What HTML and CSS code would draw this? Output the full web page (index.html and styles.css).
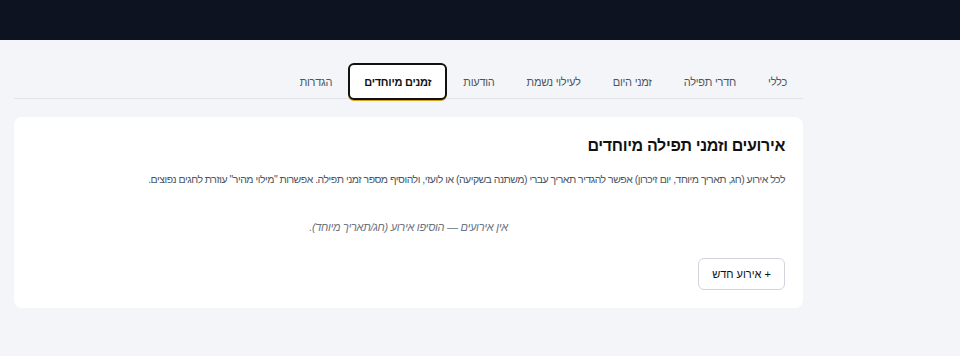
FILE: index.html
```html
<!DOCTYPE html>
<html lang="he" dir="rtl">
<head>
  <meta charset="UTF-8" />
  <meta name="viewport" content="width=device-width, initial-scale=1" />
  <title>זמנים מיוחדים</title>
  <link rel="stylesheet" href="styles.css">
</head>
<body>
  <header class="topbar"></header>

  <main class="page">
    <nav class="tabs">
      <button class="tab">כללי</button>
      <button class="tab">חדרי תפילה</button>
      <button class="tab">זמני היום</button>
      <button class="tab">לעילוי נשמת</button>
      <button class="tab">הודעות</button>
      <button class="tab active">זמנים מיוחדים</button>
      <button class="tab">הגדרות</button>
    </nav>

    <section class="card">
      <h2>אירועים וזמני תפילה מיוחדים</h2>
      <p class="desc">לכל אירוע (חג, תאריך מיוחד, יום זיכרון) אפשר להגדיר תאריך עברי (משתנה בשקיעה) או לועזי, ולהוסיף מספר זמני תפילה. אפשרות "מילוי מהיר" עוזרת לחגים נפוצים.</p>
      <p class="empty">אין אירועים — הוסיפו אירוע (חג/תאריך מיוחד).</p>
      <div class="actions">
        <button class="add-btn">+ אירוע חדש</button>
      </div>
    </section>
  </main>
</body>
</html>
```

FILE: styles.css
```css
body {
  margin: 0;
  font-family: 'Liberation Sans', Arial, sans-serif;
  background: #f4f5f9;
  color: #111827;
}
.topbar {
  height: 40px;
  background: #0d1320;
}
.page {
  width: 789px;
  margin-right: 157px;
  padding-top: 23px;
}
.tabs {
  display: flex;
  border-bottom: 1px solid #e2e4ea;
  height: 35px;
}
.tab {
  font-family: inherit;
  font-size: 11px;
  letter-spacing: -0.25px;
  color: #4b5563;
  background: none;
  border: 2px solid transparent;
  border-radius: 6px;
  padding: 0 14px;
  height: 37px;
  cursor: pointer;
}
.tab.active {
  color: #111;
  font-weight: 700;
  background: #fff;
  border-color: #111;
  box-shadow: 0 1px 0 #d9a520;
}
.card {
  margin-top: 18px;
  background: #fff;
  border-radius: 8px;
  padding: 20px 18px 18px;
}
.card h2 {
  margin: 0 0 18px;
  font-size: 16px;
  letter-spacing: -0.35px;
  font-weight: 700;
  color: #111;
}
.desc {
  margin: 0;
  font-size: 10.5px;
  letter-spacing: -0.5px;
  color: #4b5563;
}
.empty {
  margin: 36px 0 25px;
  text-align: center;
  font-style: italic;
  font-size: 11px;
  letter-spacing: -0.3px;
  color: #6b7280;
}
.actions {
  display: flex;
}
.add-btn {
  font-family: inherit;
  font-size: 11px;
  color: #111;
  background: #fff;
  border: 1px solid #d1d5db;
  border-radius: 6px;
  padding: 0 13px;
  height: 32px;
  cursor: pointer;
}
```
